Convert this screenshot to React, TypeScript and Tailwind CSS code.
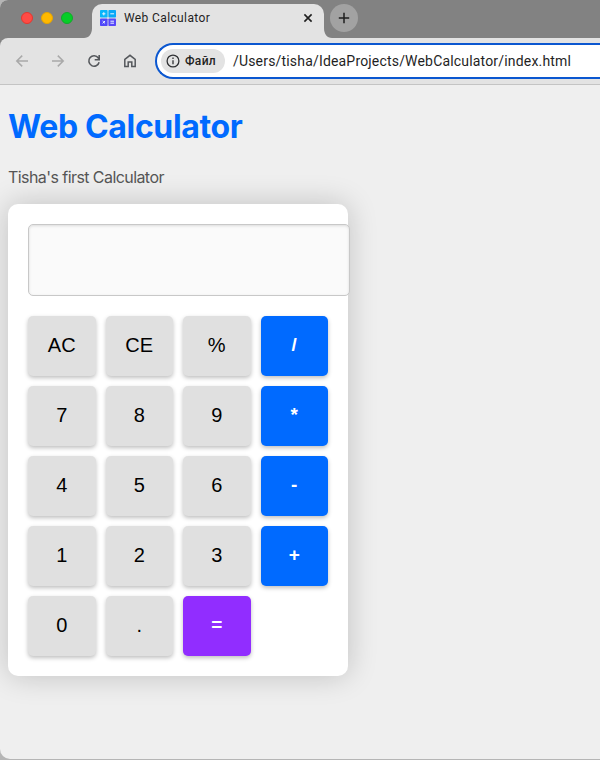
import React from 'react';

type Kind = 'plain' | 'operator' | 'equals';

const keys: { label: string; kind: Kind }[] = [
  { label: 'AC', kind: 'plain' },
  { label: 'CE', kind: 'plain' },
  { label: '%', kind: 'plain' },
  { label: '/', kind: 'operator' },
  { label: '7', kind: 'plain' },
  { label: '8', kind: 'plain' },
  { label: '9', kind: 'plain' },
  { label: '*', kind: 'operator' },
  { label: '4', kind: 'plain' },
  { label: '5', kind: 'plain' },
  { label: '6', kind: 'plain' },
  { label: '-', kind: 'operator' },
  { label: '1', kind: 'plain' },
  { label: '2', kind: 'plain' },
  { label: '3', kind: 'plain' },
  { label: '+', kind: 'operator' },
  { label: '0', kind: 'plain' },
  { label: '.', kind: 'plain' },
  { label: '=', kind: 'equals' },
];

const tone: Record<Kind, string> = {
  plain: 'bg-[#e0e0e0] text-black text-[20px]',
  operator: 'bg-[#006aff] text-white text-[19px] font-bold',
  equals: 'bg-[#912dff] text-white text-[19px] font-bold',
};

function Favicon() {
  return (
    <svg className="size-4 shrink-0" viewBox="0 0 16 16">
      <rect width="7.6" height="7.6" rx=".8" fill="#08b5fb" />
      <rect x="8.4" width="7.6" height="7.6" rx=".8" fill="#08a9f8" />
      <rect y="8.4" width="7.6" height="7.6" rx=".8" fill="#5148fa" />
      <rect x="8.4" y="8.4" width="7.6" height="7.6" rx=".8" fill="#5948fa" />
      <path
        d="M3.8 2.2v3.2M2.2 3.8h3.2M10.3 3.8h3.8M2.6 11l2.4 2.4M5 11l-2.4 2.4M10.4 11.2h3.6M10.4 13.2h3.6"
        stroke="#e9f4ff"
        strokeWidth="1"
        fill="none"
      />
    </svg>
  );
}

function TabStrip() {
  return (
    <div className="flex h-[38px] items-start bg-[#828282]">
      <div className="flex h-9 w-[84px] shrink-0 items-center gap-2 pl-[21px]">
        <span className="size-3 rounded-full border border-[#e4372f] bg-[#ff4b45]" />
        <span className="size-3 rounded-full border border-[#e7a500] bg-[#ffb900]" />
        <span className="size-3 rounded-full border border-[#12a82b] bg-[#06ce27]" />
      </div>
      <svg className="h-[10px] w-2 shrink-0 self-end" viewBox="0 0 8 10">
        <path d="M8 0v10H0C5 10 8 6 8 0Z" fill="#e3e3e3" />
      </svg>
      <div className="mt-1 flex h-[34px] w-[232px] shrink-0 items-center rounded-t-[10px] bg-[#e3e3e3] pb-[6px] pl-2 pr-[10px]">
        <Favicon />
        <span className="ml-2 whitespace-nowrap text-[12px] tracking-[0.38px] text-[#1f1f1f]">Web Calculator</span>
        <svg className="ml-auto size-3" viewBox="0 0 12 12" stroke="#1f1f1f" strokeWidth="1.6" fill="none">
          <path d="M2.4 2.4l7.2 7.2M9.6 2.4L2.4 9.6" />
        </svg>
      </div>
      <svg className="h-[10px] w-2 shrink-0 self-end" viewBox="0 0 8 10">
        <path d="M0 0v10h8C3 10 0 6 0 0Z" fill="#e3e3e3" />
      </svg>
      <div className="ml-[-2px] mt-1 flex size-7 shrink-0 items-center justify-center rounded-full bg-[#a2a2a2]">
        <svg className="size-3" viewBox="0 0 12 12" stroke="#1f1f1f" strokeWidth="1.5" fill="none">
          <path d="M6 .8v10.4M.8 6h10.4" />
        </svg>
      </div>
    </div>
  );
}

function Toolbar() {
  return (
    <div className="bg-[#828282]">
      <div className="flex h-[47px] items-center rounded-tl-[8px] border-b border-[#c4c4c4] bg-[#e3e3e3] pl-[14px]">
        <svg className="size-4 shrink-0" viewBox="0 0 16 16" stroke="#a9a9a9" strokeWidth="1.5" fill="none">
          <path d="M14 8H3M8.2 2.6L2.8 8l5.4 5.4" />
        </svg>
        <svg className="ml-5 size-4 shrink-0" viewBox="0 0 16 16" stroke="#a9a9a9" strokeWidth="1.5" fill="none">
          <path d="M2 8h11M7.8 2.6L13.2 8l-5.4 5.4" />
        </svg>
        <svg className="ml-5 size-4 shrink-0" viewBox="0 0 16 16" stroke="#55585c" strokeWidth="1.6" fill="none">
          <path d="M13.1 9.2A5.2 5.2 0 1 1 12.3 5L13.2 6.1M13.2 2v4.7H8.7" />
        </svg>
        <svg className="ml-5 size-4 shrink-0" viewBox="0 0 16 16" stroke="#55585c" strokeWidth="1.5" fill="none">
          <path d="M2.8 13.5V6.3L8 2.3l5.2 4v7.2H9.8V8.9H6.2v4.6Z" />
        </svg>
        <div className="ml-[17px] flex h-9 flex-1 items-center rounded-l-full border-2 border-r-0 border-[#0b57d0] bg-white pl-1">
          <div className="flex h-6 w-16 shrink-0 items-center rounded-full bg-[#e3e3e3] pl-[5px]">
            <svg className="size-[14px] shrink-0" viewBox="0 0 14 14" fill="none" stroke="#303134" strokeWidth="1.3">
              <circle cx="7" cy="7" r="5.9" />
              <path d="M7 6.2v4M7 3.6v1.4" />
            </svg>
            <span className="ml-[5px] text-[12px] font-medium tracking-[0.3px] text-[#1f1f1f]">Файл</span>
          </div>
          <span className="ml-2 whitespace-nowrap text-[14px] tracking-[0.18px] text-[#1f1f1f]">
            /Users/tisha/IdeaProjects/WebCalculator/index.html
          </span>
        </div>
      </div>
    </div>
  );
}

function Calculator() {
  return (
    <section className="mt-4 h-[472px] w-[340px] rounded-[10px] bg-white p-5 shadow-[0_0_30px_rgba(0,0,0,0.2)]">
      <input
        readOnly
        aria-label="Result"
        className="block h-[72px] w-[322px] rounded-[5px] border border-[#c8c8c8] bg-[#fafafa] shadow-[inset_0_1px_3px_rgba(0,0,0,0.12)] outline-none"
      />
      <div className="mt-5 grid grid-cols-4 gap-[10px]">
        {keys.map(({ label, kind }) => (
          <button
            key={label}
            className={`h-[60px] rounded-[5px] pb-[2px] font-['Liberation_Sans',Arial,sans-serif] shadow-[0_2px_4px_rgba(0,0,0,0.25)] ${tone[kind]}`}
          >
            {label}
          </button>
        ))}
      </div>
    </section>
  );
}

export default function App() {
  return (
    <div className="h-[760px] w-[600px] overflow-hidden bg-[#b5b5b5] font-[Roboto,'Noto_Sans',sans-serif]">
      <div className="h-[759px] overflow-hidden rounded-bl-[10px] rounded-tl-[8px] bg-[#efefef]">
        <TabStrip />
        <Toolbar />
        <main className="px-2 pt-[22px] font-[Inter,'Open_Sans',sans-serif]">
          <h1 className="h-10 whitespace-nowrap text-[32px] font-bold leading-10 tracking-[-0.35px] text-[#006aff]">
            Web Calculator
          </h1>
          <p className="mt-[19px] h-[22px] whitespace-nowrap text-[16px] leading-[22px] tracking-[-0.57px] text-[#555]">
            Tisha's first Calculator
          </p>
          <Calculator />
        </main>
      </div>
    </div>
  );
}
